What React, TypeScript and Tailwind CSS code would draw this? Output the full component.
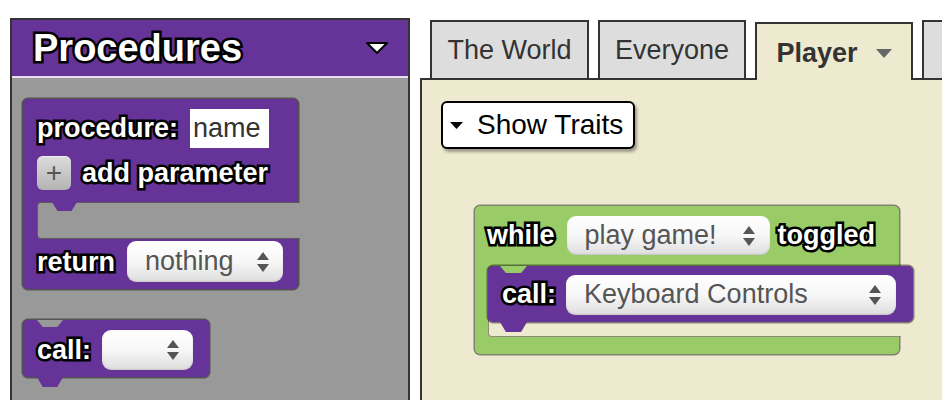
import React from 'react';
import clsx from 'clsx';

const PURPLE = 'bg-[#663399]';
const label =
  'text-[27px] font-bold text-white leading-none whitespace-nowrap [-webkit-text-stroke:5px_#000] [paint-order:stroke_fill]';
const outline = 'shadow-[0_0_0_1.5px_rgba(0,0,0,0.45)]';
const notch = '[clip-path:polygon(0_0,100%_0,78%_100%,22%_100%)]';

const Arrows: React.FC = () => (
  <svg width="12" height="20" viewBox="0 0 12 20" className="shrink-0">
    <polygon points="6,0 12,8 0,8" fill="#555" />
    <polygon points="0,12 12,12 6,20" fill="#555" />
  </svg>
);

interface DropdownProps {
  text?: string;
  className?: string;
}

const Dropdown: React.FC<DropdownProps> = ({ text, className }) => (
  <div
    className={clsx(
      'flex items-center justify-between rounded-[9px] bg-linear-to-b from-white via-[#f7f7f7] to-[#dedede] shadow-[inset_0_-1px_2px_rgba(0,0,0,0.12)] pl-[18px] pr-[14px] text-[27px] leading-none text-[#555] whitespace-nowrap shrink-0',
      className
    )}
  >
    <span>{text}</span>
    <Arrows />
  </div>
);

const Tab: React.FC<{ children: React.ReactNode; className?: string }> = ({ children, className }) => (
  <div
    className={clsx(
      'h-[58px] shrink-0 flex items-center justify-center border-2 border-b-0 border-[#333] bg-[#dddddd] text-[27px] text-[#333]',
      className
    )}
  >
    {children}
  </div>
);

export default function App() {
  return (
    <div className="w-[942px] h-[400px] overflow-hidden bg-white flex items-start font-['Liberation_Sans',Arial,sans-serif]">
      {/* Left: procedures drawer */}
      <div className="ml-[10px] mt-[18px] w-[400px] h-[400px] shrink-0 border-2 border-b-0 border-[#333] flex flex-col">
        <div className="h-[58px] shrink-0 bg-[#663399] border-b-2 border-[#e6e0ee] flex items-center justify-between pl-[21px] pr-[19px]">
          <span className="text-[38px] font-bold text-white leading-none [-webkit-text-stroke:5px_#000] [paint-order:stroke_fill]">
            Procedures
          </span>
          <svg width="24" height="14" viewBox="0 0 24 14">
            <polygon points="2,2 22,2 12,12" fill="#fff" stroke="#000" strokeWidth="2" strokeLinejoin="round" />
          </svg>
        </div>

        <div className="flex-1 bg-[#999999] pt-[21px] pl-[11px] flex flex-col items-start">
          {/* procedure definition */}
          <div className={clsx('relative w-[275px] rounded-[5px]', PURPLE, outline)}>
            <div className="pl-[14px] pt-[10px] pb-[12px] flex flex-col gap-[8px]">
              <div className="flex items-center gap-[12px] h-[39px]">
                <span className={label}>procedure:</span>
                <div className="h-[39px] bg-white flex items-center pl-[3px] pr-[8px] text-[27px] leading-none text-[#333]">
                  name
                </div>
              </div>
              <div className="flex items-center gap-[11px] h-[34px]">
                <div className="w-[34px] h-[34px] rounded-[6px] bg-linear-to-b from-[#dcdcdc] to-[#b4b4b4] shadow-[inset_0_1px_1px_rgba(255,255,255,0.6)] flex items-center justify-center text-[28px] leading-none text-[#555]">
                  +
                </div>
                <span className={label}>add parameter</span>
              </div>
            </div>
            <div className="relative ml-[14px] -mr-[2px] h-[37px] bg-[#999999] border-y border-l border-black/40 rounded-l-[4px]">
              <div className={clsx('absolute left-[14px] -top-px w-[25px] h-[9px]', PURPLE, notch)} />
            </div>
            <div className="h-[50px] flex items-start gap-[12px] pl-[14px] pt-[2px]">
              <span className={clsx(label, 'mt-[8px]')}>return</span>
              <Dropdown text="nothing" className="w-[156px] h-[41px] pl-[17px]" />
            </div>
          </div>

          {/* call block */}
          <div className={clsx('relative mt-[31px] w-[186px] h-[57px] rounded-[5px] flex items-center gap-[11px] pl-[14px] pt-[3px]', PURPLE, outline)}>
            <div className={clsx('absolute left-[14px] top-0 w-[26px] h-[7px] bg-[#999999]', notch)} />
            <span className={label}>call:</span>
            <Dropdown className="w-[91px] h-[40px] pr-[13px]" />
            <div className={clsx('absolute left-[14px] top-full w-[26px] h-[10px]', PURPLE, notch)} />
          </div>
        </div>
      </div>

      {/* Right: tabs and workspace */}
      <div className="ml-[10px] mt-[20px] flex-1 min-w-0 flex flex-col">
        <div className="flex items-end gap-[9px] pl-[10px]">
          <Tab className="w-[159px]">The World</Tab>
          <Tab className="w-[148px]">Everyone</Tab>
          <Tab className="relative z-10 w-[158px] mb-[-2px] bg-[#eeeacf] gap-[18px] font-bold pt-[2px] h-[58px]">
            <span>Player</span>
            <svg width="16" height="9" viewBox="0 0 16 9">
              <polygon points="0,0 16,0 8,9" fill="#666" />
            </svg>
          </Tab>
          <Tab className="w-[100px]">&nbsp;</Tab>
        </div>

        <div className="h-[400px] border-t-2 border-l-2 border-[#333] bg-[#eeeacf] pl-[19px] pt-[21px] flex flex-col items-start">
          <div className="w-[194px] h-[48px] border-2 border-black rounded-[6px] bg-white shadow-[2px_3px_3px_rgba(0,0,0,0.35)] flex items-center pl-[7px] gap-[14px] text-[28px] leading-none text-black">
            <svg width="13" height="7" viewBox="0 0 13 7">
              <polygon points="0,0 13,0 6.5,7" fill="#000" />
            </svg>
            <span>Show Traits</span>
          </div>

          {/* while block */}
          <div className={clsx('relative ml-[34px] mt-[57px] w-[424px] rounded-[5px] bg-[#99cc66]', outline)}>
            <div className="h-[60px] flex items-center pl-[12px] pb-[1px]">
              <span className={label}>while</span>
              <Dropdown text="play game!" className="ml-[12px] w-[203px] h-[39px] pr-[15px]" />
              <span className={clsx(label, 'ml-[8px]')}>toggled</span>
            </div>
            <div className="relative ml-[13px] -mr-[2px] bg-[#eeeacf] border-y border-l border-black/40 rounded-l-[4px]">
              <div className={clsx('relative w-[425px] h-[56px] -ml-px -mt-px rounded-[5px] flex items-center gap-[10px] pl-[14px] pt-[1px]', PURPLE, outline)}>
                <span className={label}>call:</span>
                <Dropdown text="Keyboard Controls" className="w-[330px] h-[40px] pr-[15px]" />
                <div className={clsx('absolute left-[12px] top-full w-[27px] h-[10px]', PURPLE, notch)} />
              </div>
              <div className="h-[14px]" />
              <div className={clsx('absolute z-10 left-[11px] -top-px w-[27px] h-[7px] bg-[#99cc66]', notch)} />
            </div>
            <div className="h-[17px]" />
          </div>
        </div>
      </div>
    </div>
  );
}
